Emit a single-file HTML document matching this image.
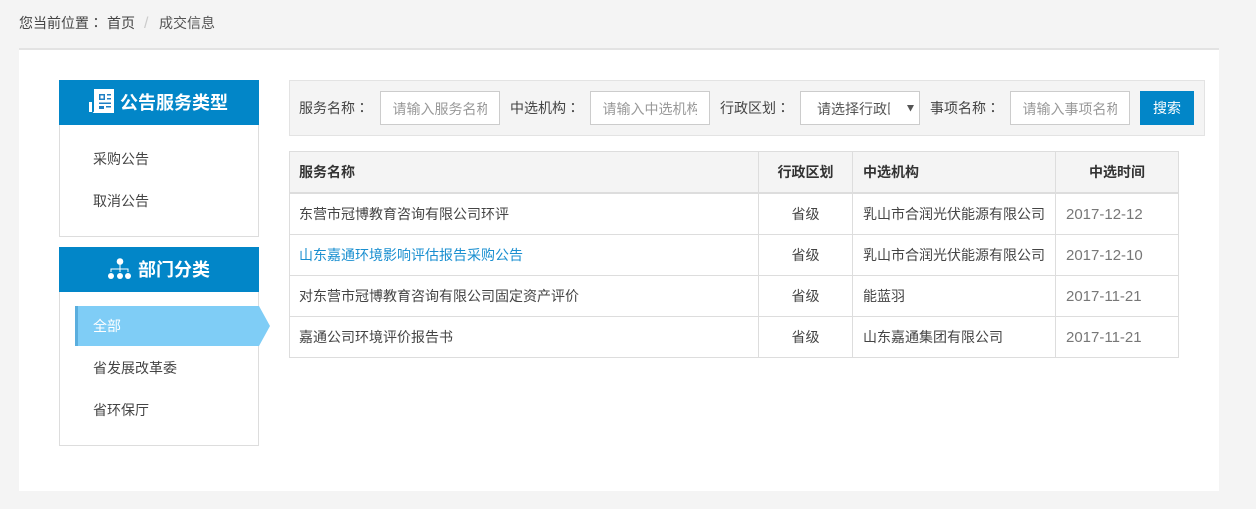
<!DOCTYPE html>
<html lang="zh">
<head>
<meta charset="utf-8">
<style>
html,body{margin:0;padding:0}
body{width:1256px;height:509px;background:#f4f4f4;position:relative;overflow:hidden;font-family:"Liberation Sans","Noto Sans CJK SC",sans-serif;font-size:14px;color:#444}
.a{position:absolute;box-sizing:border-box;white-space:nowrap}
.t{position:absolute;white-space:nowrap;line-height:20px}
.k{font-family:"Noto Sans CJK TC",sans-serif}
.input{position:absolute;box-sizing:border-box;height:34px;width:120px;top:91px;background:#fff;border:1px solid #ccc;overflow:hidden}
.input span{position:absolute;left:11.5px;top:7px;width:94.500px;overflow:hidden;line-height:20px;color:#999;white-space:nowrap}
.hd{position:absolute;left:59px;width:200px;height:45px;background:#0286c8}
.hd b{position:absolute;top:11px;line-height:24px;font-size:18px;color:#fff;font-weight:700;white-space:nowrap}
.line{position:absolute;background:#ddd}
.c{text-align:center}
.th{font-weight:700;color:#333}
.d{font-size:15px;color:#777;left:1066px}
</style>
</head>
<body>
<div class="t" style="left:19px;top:13px;color:#444">您当前位置<span class="k" lang="zh-TW">：</span></div>
<div class="t" style="left:107px;top:13px;color:#444">首页</div>
<div class="t" style="left:144px;top:14px;font-size:16px;color:#ccc">/</div>
<div class="t" style="left:159px;top:13px;color:#555">成交信息</div>

<div class="a" style="left:19px;top:48px;width:1200px;height:443px;background:#fff;border-top:2px solid #e3e3e3"></div>

<!-- sidebar 1 -->
<div class="a" style="left:59px;top:124px;width:200px;height:113px;border:1px solid #ddd;border-top:0"></div>
<div class="hd" style="top:80px">
<svg style="position:absolute;left:30px;top:9px" width="26" height="26" viewBox="0 0 26 26"><path fill="#fff" d="M0 13h3v10H0zM5 0h20v24H3.500l1.500-1.500z"/><path fill="#1f7fc4" d="M10 5h6v6h-6zM18 5h4v1.500h-4zM18 9h4v1.500h-4zM10 13.500h12V15H10zM10 17h5v3h-5zM17 17h5v1.500h-5z"/><path fill="#fff" d="M11.500 6.500h3v3h-3z"/></svg>
<b style="left:61px">公告服务类型</b>
</div>
<div class="t" style="left:93px;top:149px;color:#444">采购公告</div>
<div class="t" style="left:93px;top:191px;color:#444">取消公告</div>

<!-- sidebar 2 -->
<div class="a" style="left:59px;top:291px;width:200px;height:155px;border:1px solid #ddd;border-top:0"></div>
<div class="hd" style="top:247px">
<svg style="position:absolute;left:49px;top:11px" width="24" height="23" viewBox="0 0 24 23"><g fill="#fff"><circle cx="12" cy="3.500" r="3.300"/><circle cx="3" cy="18" r="3"/><circle cx="12" cy="18" r="3"/><circle cx="20" cy="18" r="3"/></g><path d="M12 6v8M3 14v-3h17v3" fill="none" stroke="#fff" stroke-width="1"/></svg>
<b style="left:79px">部门分类</b>
</div>
<svg style="position:absolute;left:75px;top:306px" width="196" height="40" viewBox="0 0 196 40"><path fill="#7fcdf6" d="M0 0h184l11 20-11 20H0z"/><path fill="#5aaede" d="M0 0h3v40H0z"/></svg>
<div class="t" style="left:93px;top:316px;color:#fff">全部</div>
<div class="t" style="left:93px;top:358px;color:#444">省发展改革委</div>
<div class="t" style="left:93px;top:400px;color:#444">省环保厅</div>

<!-- search -->
<div class="a" style="left:289px;top:80px;width:916px;height:56px;background:#f4f4f4;border:1px solid #e3e3e3"></div>
<div class="t" style="left:299px;top:98px">服务名称<span class="k" lang="zh-TW">：</span></div>
<div class="input" style="left:380px"><span>请输入服务名称</span></div>
<div class="t" style="left:510px;top:98px">中选机构<span class="k" lang="zh-TW">：</span></div>
<div class="input" style="left:590px"><span>请输入中选机构</span></div>
<div class="t" style="left:720px;top:98px">行政区划<span class="k" lang="zh-TW">：</span></div>
<div class="input" style="left:800px"><span style="left:16px;width:73px;color:#555">请选择行政区划</span>
<svg style="position:absolute;left:106px;top:12px" width="7" height="8" viewBox="0 0 7 8"><path fill="#555" d="M0 1h7L3.500 7.500z"/></svg></div>
<div class="t" style="left:930px;top:98px">事项名称<span class="k" lang="zh-TW">：</span></div>
<div class="input" style="left:1010px"><span>请输入事项名称</span></div>
<div class="a c" style="left:1140px;top:91px;width:54px;height:34px;background:#0286c8;color:#fff;line-height:34px">搜索</div>

<!-- table -->
<div class="a" style="left:289px;top:151px;width:890px;height:207px;border:1px solid #ddd;background:#fff"></div>
<div class="a" style="left:290px;top:152px;width:888px;height:40px;background:#f4f4f4"></div>
<div class="line" style="left:290px;top:192px;width:888px;height:2px"></div>
<div class="line" style="left:290px;top:234px;width:888px;height:1px"></div>
<div class="line" style="left:290px;top:275px;width:888px;height:1px"></div>
<div class="line" style="left:290px;top:316px;width:888px;height:1px"></div>
<div class="line" style="left:758px;top:152px;width:1px;height:205px"></div>
<div class="line" style="left:852px;top:152px;width:1px;height:205px"></div>
<div class="line" style="left:1055px;top:152px;width:1px;height:205px"></div>

<div class="t th" style="left:299px;top:162px">服务名称</div>
<div class="t c th" style="left:759px;width:93px;top:162px">行政区划</div>
<div class="t th" style="left:863px;top:162px">中选机构</div>
<div class="t c th" style="left:1056px;width:122px;top:162px">中选时间</div>

<div class="t" style="left:299px;top:204px">东营市冠博教育咨询有限公司环评</div>
<div class="t c" style="left:759px;width:93px;top:204px">省级</div>
<div class="t" style="left:863px;top:204px">乳山市合润光伏能源有限公司</div>
<div class="t d" style="top:205px">2017-12-12</div>

<div class="t" style="left:299px;top:245px;color:#1a8fd0">山东嘉通环境影响评估报告采购公告</div>
<div class="t c" style="left:759px;width:93px;top:245px">省级</div>
<div class="t" style="left:863px;top:245px">乳山市合润光伏能源有限公司</div>
<div class="t d" style="top:246px">2017-12-10</div>

<div class="t" style="left:299px;top:286px">对东营市冠博教育咨询有限公司固定资产评价</div>
<div class="t c" style="left:759px;width:93px;top:286px">省级</div>
<div class="t" style="left:863px;top:286px">能蓝羽</div>
<div class="t d" style="top:287px">2017-11-21</div>

<div class="t" style="left:299px;top:327px">嘉通公司环境评价报告书</div>
<div class="t c" style="left:759px;width:93px;top:327px">省级</div>
<div class="t" style="left:863px;top:327px">山东嘉通集团有限公司</div>
<div class="t d" style="top:328px">2017-11-21</div>
</body>
</html>
